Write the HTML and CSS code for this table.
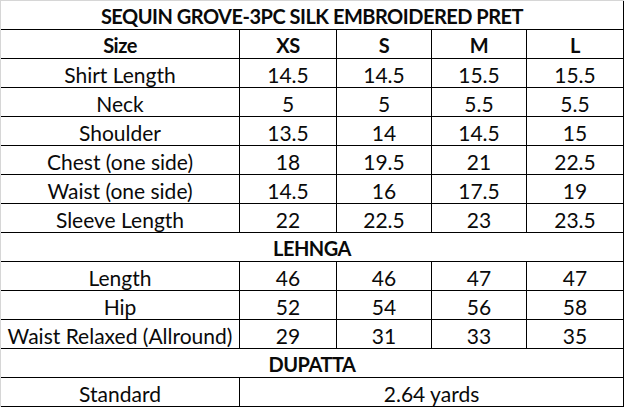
FILE: index.html
```html
<!DOCTYPE html>
<html>
<head>
<meta charset="utf-8">
<link rel="stylesheet" href="styles.css">
</head>
<body>
<div class="sheet">
  <div class="cell span bold">SEQUIN GROVE-3PC SILK EMBROIDERED PRET</div>

  <div class="cell bold">Size</div>
  <div class="cell bold">XS</div>
  <div class="cell bold">S</div>
  <div class="cell bold">M</div>
  <div class="cell bold">L</div>

  <div class="cell">Shirt Length</div>
  <div class="cell">14.5</div>
  <div class="cell">14.5</div>
  <div class="cell">15.5</div>
  <div class="cell">15.5</div>

  <div class="cell">Neck</div>
  <div class="cell">5</div>
  <div class="cell">5</div>
  <div class="cell">5.5</div>
  <div class="cell">5.5</div>

  <div class="cell">Shoulder</div>
  <div class="cell">13.5</div>
  <div class="cell">14</div>
  <div class="cell">14.5</div>
  <div class="cell">15</div>

  <div class="cell">Chest (one side)</div>
  <div class="cell">18</div>
  <div class="cell">19.5</div>
  <div class="cell">21</div>
  <div class="cell">22.5</div>

  <div class="cell">Waist (one side)</div>
  <div class="cell">14.5</div>
  <div class="cell">16</div>
  <div class="cell">17.5</div>
  <div class="cell">19</div>

  <div class="cell">Sleeve Length</div>
  <div class="cell">22</div>
  <div class="cell">22.5</div>
  <div class="cell">23</div>
  <div class="cell">23.5</div>

  <div class="cell span bold">LEHNGA</div>

  <div class="cell">Length</div>
  <div class="cell">46</div>
  <div class="cell">46</div>
  <div class="cell">47</div>
  <div class="cell">47</div>

  <div class="cell">Hip</div>
  <div class="cell">52</div>
  <div class="cell">54</div>
  <div class="cell">56</div>
  <div class="cell">58</div>

  <div class="cell">Waist Relaxed (Allround)</div>
  <div class="cell">29</div>
  <div class="cell">31</div>
  <div class="cell">33</div>
  <div class="cell">35</div>

  <div class="cell span bold">DUPATTA</div>

  <div class="cell">Standard</div>
  <div class="cell wide">2.64 yards</div>
</div>
</body>
</html>
```

FILE: styles.css
```css
html, body {
  margin: 0;
  padding: 0;
  background: #ffffff;
}

.sheet {
  display: grid;
  grid-template-columns: 239px 97px 95px 95px 97px;
  grid-auto-rows: 29px;
  width: 624px;
  box-sizing: border-box;
  border-top: 1px solid #d6d6d6;
  border-left: 1px solid #d6d6d6;
  font-family: "Lato", "Liberation Sans", sans-serif;
  font-size: 21px;
  color: #0a0a0a;
}

.cell {
  box-sizing: border-box;
  border-right: 1px solid #000;
  border-bottom: 1px solid #000;
  display: flex;
  align-items: center;
  justify-content: center;
  padding-top: 2px;
  white-space: nowrap;
  overflow: visible;
}

.bold {
  font-weight: bold;
  font-size: 20px;
  letter-spacing: -0.5px;
}

.span {
  grid-column: 1 / -1;
}

.wide {
  grid-column: 2 / -1;
}
```
